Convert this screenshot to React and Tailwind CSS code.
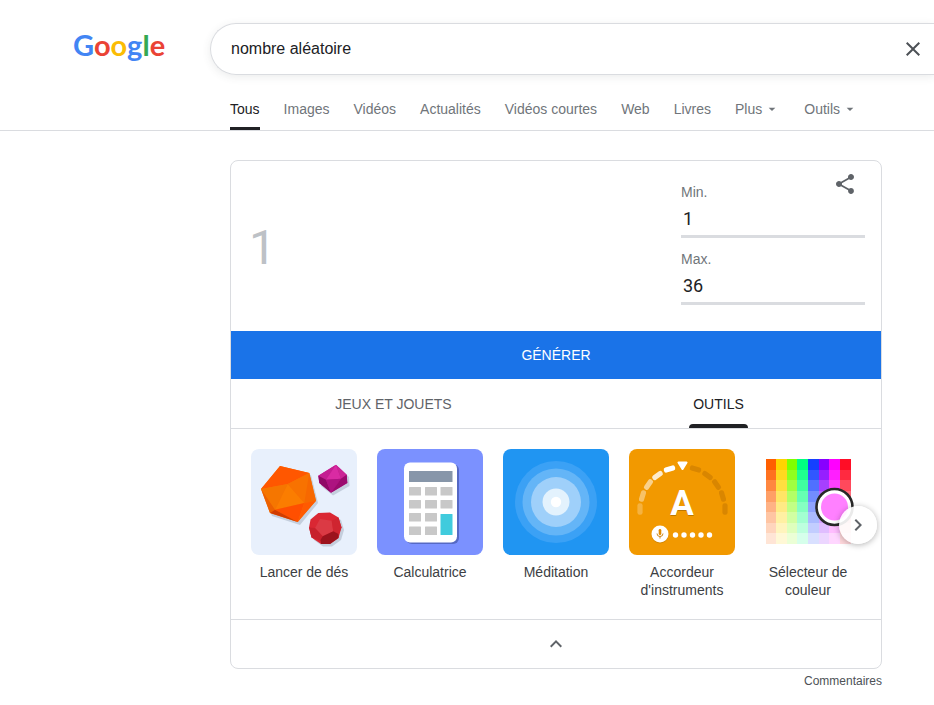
import React, { useState } from 'react';
import { MdShare, MdClose, MdArrowDropDown, MdExpandLess, MdChevronRight } from 'react-icons/md';

const NAV_LINKS = ['Images', 'Vidéos', 'Actualités', 'Vidéos courtes', 'Web', 'Livres'];

const DiceArt = () => (
    <svg viewBox="0 0 106 106" className="block w-full" aria-hidden="true">
        <rect width="106" height="106" fill="#e8f0fc" />
        {/* shadows */}
        <g fill="#9aa5b8" opacity="0.45">
            <path d="M31 19L60 26L67 54L49 76L21 67L12 43Z" />
            <path d="M69 29L87 18L98 28L98.500 37L82 46.500L70 37Z" />
            <path d="M69 66L81 66L90 71L93 81L90 91L81 97.500L72 97.500L63 91L60 81Z" />
        </g>
        {/* orange */}
        <path d="M29 17L58.300 24L65 51.700L46.700 73L19 64L10 40Z" fill="#f97300" />
        <path d="M10 40L29 17L58.300 24L36.700 35Z" fill="#ff5700" />
        <path d="M36.700 35L53.300 54L24 60.700Z" fill="#fb7d00" />
        <path d="M10 40L36.700 35L24 60.700Z" fill="#f57600" />
        <path d="M36.700 35L58.300 24L53.300 54Z" fill="#f87200" />
        <path d="M58.300 24L65 51.700L53.300 54Z" fill="#f76800" />
        <path d="M10 40L24 60.700L19 64Z" fill="#ec6000" />
        <path d="M24 60.700L53.300 54L46.700 73Z" fill="#ff4f00" />
        <path d="M53.300 54L65 51.700L46.700 73Z" fill="#ff5a00" />
        <path d="M24 60.700L19 64L46.700 73Z" fill="#d13c00" />
        {/* magenta */}
        <path d="M67.300 26.700L85 15.700L95.700 25.700L96.300 34L80 43.700L68.300 34Z" fill="#c2188a" />
        <path d="M67.300 26.700L85 15.700L75 30.700Z" fill="#c41e92" />
        <path d="M85 15.700L90 29.700L75 30.700Z" fill="#d92ba3" />
        <path d="M85 15.700L95.700 25.700L90 29.700Z" fill="#cb2596" />
        <path d="M67.300 26.700L75 30.700L80 43.700L68.300 34Z" fill="#8f0a66" />
        <path d="M75 30.700L90 29.700L80 43.700Z" fill="#ad1380" />
        <path d="M90 29.700L95.700 25.700L96.300 34L80 43.700Z" fill="#9b0b6e" />
        {/* red */}
        <path d="M67.300 64L79 63.500L87.500 68.500L90.500 78.500L87.500 89L79 95L70 95L60.500 88.500L58 78.500L59.500 70.500Z" fill="#da2733" />
        <path d="M69 70L80.700 71.700L82.300 82.300L71.700 87.300L64 79Z" fill="#db3a44" />
        <path d="M80.700 71.700L87.500 68.500L90.500 78.500L87.500 85L82.300 82.300Z" fill="#cf2530" />
        <path d="M58 78.500L64 79L71.700 87.300L70 92L60.500 88.500Z" fill="#c7212c" />
        <path d="M71.700 87.300L82.300 82.300L87.500 85L87.500 89L79 95L70 95L69.500 91Z" fill="#9c131d" />
    </svg>
);

const CalculatorArt = () => (
    <svg viewBox="0 0 106 106" className="block w-full" aria-hidden="true">
        <rect width="106" height="106" fill="#7b91ff" />
        <rect x="29" y="15" width="53" height="80" rx="6" fill="#5669c4" />
        <rect x="27" y="13.500" width="53" height="80" rx="6" fill="#fff" />
        <rect x="32" y="22" width="43.500" height="11" fill="#8796a9" />
        <g fill="#c8c8c8">
            {[38, 51, 64, 77.5].map((y, row) =>
                [32, 48, 63.5].map((x, col) =>
                    row > 1 && col === 2 ? null : <rect key={`${x}-${y}`} x={x} y={y} width="12" height="8.500" rx="0.500" />
                )
            )}
        </g>
        <rect x="63.500" y="65" width="12" height="21" rx="0.500" fill="#40cbdd" />
    </svg>
);

const MeditationArt = () => (
    <svg viewBox="0 0 106 106" className="block w-full" aria-hidden="true">
        <rect width="106" height="106" fill="#2095f2" />
        <circle cx="53" cy="53" r="41" fill="#3ba1f5" />
        <circle cx="53" cy="53" r="33.500" fill="#64b5f7" />
        <circle cx="53" cy="53" r="25" fill="#9fd0fa" />
        <circle cx="53" cy="53" r="13.500" fill="#e3f2fd" />
        <circle cx="53" cy="53" r="5.200" fill="#fff" />
    </svg>
);

// [x, y, angle, opacity] of each dash on the left half of the dial
const DIAL = [
    [11, 60, -90, 0.25],
    [13.5, 47, -73, 0.4],
    [19.5, 35.5, -55, 0.55],
    [28.5, 26.5, -35, 0.8],
    [40.5, 20, -16, 1],
];

const TunerArt = () => (
    <svg viewBox="0 0 106 106" className="block w-full" aria-hidden="true">
        <rect width="106" height="106" fill="#f29900" />
        {DIAL.map(([x, y, angle, opacity]) => (
            <g key={x}>
                <rect x="-5.800" y="-2.600" width="11.600" height="5.200" rx="2.200" fill="#fff" opacity={opacity} transform={`translate(${x} ${y}) rotate(${angle})`} />
                <rect x="-5.800" y="-2.600" width="11.600" height="5.200" rx="2.200" fill="#d98600" transform={`translate(${107 - x} ${y}) rotate(${-angle})`} />
            </g>
        ))}
        <path d="M49.500 12.500h8a1 1 0 0 1 .9 1.500l-4 6.500a1 1 0 0 1-1.800 0l-4-6.500a1 1 0 0 1 .9-1.500z" fill="#fff" />
        <text x="53" y="67" textAnchor="middle" fontFamily="Roboto, sans-serif" fontWeight="700" fontSize="35" fill="#bd7700">A</text>
        <text x="53" y="66" textAnchor="middle" fontFamily="Roboto, sans-serif" fontWeight="700" fontSize="35" fill="#fff">A</text>
        <circle cx="31" cy="86" r="8.500" fill="#d48600" />
        <circle cx="31" cy="85" r="8.500" fill="#fff" />
        <rect x="29.700" y="80" width="2.600" height="6" rx="1.300" fill="#e08a00" />
        <path d="M28 84.500a3 3 0 0 0 6 0M31 87.500v2" stroke="#c87a00" strokeWidth="0.900" fill="none" />
        {[46.5, 55, 63.5, 72, 80.5].map((x) => <circle key={x} cx={x} cy="86" r="2.700" fill="#fff" />)}
    </svg>
);

const HUES = ['#ff5f00', '#ffd400', '#80ff00', '#00ff80', '#1540ff', '#8800ff', '#ff00ff', '#ff0d26'];
const TINTS = [0, 0.12, 0.25, 0.4, 0.52, 0.64, 0.74, 0.84];

const ColorPickerArt = () => (
    <svg viewBox="0 0 106 106" className="block w-full" aria-hidden="true">
        <rect width="106" height="106" fill="#fff" />
        <g shapeRendering="crispEdges">
            {HUES.map((hue, i) => (
                <rect key={hue} x={10.5 + i * 10.625} y="10" width="10.700" height="85" fill={hue} />
            ))}
            {TINTS.map((tint, i) => (
                <rect key={tint} x="10" y={10 + i * 10.625} width="86" height="10.700" fill="#fff" opacity={tint} />
            ))}
        </g>
        <circle cx="79.500" cy="58" r="18" fill="#fff" stroke="#282828" strokeWidth="2.600" />
        <circle cx="79.500" cy="58" r="13.500" fill="#ff80ff" />
    </svg>
);

const TOOLS = [
    { name: 'Lancer de dés', Art: DiceArt },
    { name: 'Calculatrice', Art: CalculatorArt },
    { name: 'Méditation', Art: MeditationArt },
    { name: "Accordeur d'instruments", Art: TunerArt },
    { name: 'Sélecteur de couleur', Art: ColorPickerArt },
];

const Logo = () => (
    <a href="#accueil" aria-label="Google" className="block pb-2 font-['Lato',sans-serif] text-[29px] leading-9 font-bold">
        <span className="text-[#4285f4]">G</span>
        <span className="text-[#ea4335]">o</span>
        <span className="text-[#fbbc05]">o</span>
        <span className="text-[#4285f4]">g</span>
        <span className="text-[#34a853]">l</span>
        <span className="text-[#ea4335]">e</span>
    </a>
);

const NumberField = ({ id, value, onChange }) => (
    <input
        id={id}
        type="text"
        inputMode="numeric"
        value={value}
        onChange={(e) => onChange(e.target.value)}
        className="block h-9 w-full border-b-3 border-[#dadce0] pl-0.5 font-['Roboto',sans-serif] text-lg text-[#202124] outline-none"
    />
);

const Header = () => {
    const [query, setQuery] = useState('nombre aléatoire');

    return (
        <header className="border-b border-[#dadce0] pt-[23px]">
            <div className="flex items-center">
                <div className="w-[210px] shrink-0 pl-[73px]">
                    <Logo />
                </div>
                <form className="flex h-[52px] min-w-0 flex-1 items-center rounded-l-full border border-r-0 border-[#dadce0] pr-[9px] pl-5 shadow-[0_2px_8px_rgba(60,64,67,0.1)]">
                    <input
                        type="text"
                        aria-label="Rechercher"
                        value={query}
                        onChange={(e) => setQuery(e.target.value)}
                        className="min-w-0 flex-1 text-base text-[#202124] outline-none"
                    />
                    <button type="button" aria-label="Effacer" onClick={() => setQuery('')}>
                        <MdClose className="size-6 text-[#4d5156]" />
                    </button>
                </form>
            </div>
            <nav className="ml-[230px] flex h-[55px] items-end gap-6 text-sm whitespace-nowrap text-[#70757a]">
                <a href="#tous" className="border-b-3 border-[#202124] pb-2 text-[#202124]">Tous</a>
                {NAV_LINKS.map((name) => (
                    <a key={name} href={`#${name}`} className="pb-[11px]">{name}</a>
                ))}
                <button type="button" className="flex items-center gap-0.5 pb-[11px]">
                    Plus <MdArrowDropDown className="size-4" />
                </button>
                <button type="button" className="flex items-center gap-0.5 pb-[11px]">
                    Outils <MdArrowDropDown className="size-4" />
                </button>
            </nav>
        </header>
    );
};

const Generator = () => {
    const [min, setMin] = useState('1');
    const [max, setMax] = useState('36');
    const [result, setResult] = useState(1);

    const generate = () => {
        const low = Number(min);
        const high = Number(max);
        if (Number.isNaN(low) || Number.isNaN(high) || high < low) return;
        setResult(low + Math.floor(Math.random() * (high - low + 1)));
    };

    return (
        <>
            <div className="flex justify-between px-4 pb-[26px]">
                <output className="self-center pt-[30px] pl-0.5 font-['Roboto',sans-serif] text-5xl leading-14 text-[#bdc1c6]">{result}</output>
                <div className="w-[184px] pt-[11px] text-sm text-[#70757a]">
                    <div className="flex h-[30px] items-start justify-between pr-2">
                        <label htmlFor="min" className="self-end">Min.</label>
                        <button type="button" aria-label="Partager">
                            <MdShare className="size-6 text-[#5f6368]" />
                        </button>
                    </div>
                    <NumberField id="min" value={min} onChange={setMin} />
                    <label htmlFor="max" className="mt-[11px] block">Max.</label>
                    <NumberField id="max" value={max} onChange={setMax} />
                </div>
            </div>
            <button type="button" onClick={generate} className="block h-12 w-full bg-[#1a73e8] text-sm text-white">
                GÉNÉRER
            </button>
        </>
    );
};

const App = () => (
    <div className="bg-white font-['Liberation_Sans',Arial,sans-serif]">
        <Header />

        <main className="mt-[29px] ml-[230px] max-w-[652px]">
            <section className="overflow-hidden rounded-lg border border-[#dadce0]">
                <Generator />

                {/* Tabs */}
                <div role="tablist" className="grid h-[50px] grid-cols-2 border-b border-[#dadce0] text-sm">
                    <button type="button" role="tab" aria-selected="false" className="text-[#5f6368]">JEUX ET JOUETS</button>
                    <button type="button" role="tab" aria-selected="true" className="flex flex-col items-center justify-end text-[#202124]">
                        <span className="px-1 pb-[10px]">OUTILS</span>
                        <span className="h-1 w-[59px] rounded-t-sm bg-[#202124]"></span>
                    </button>
                </div>

                {/* Tools */}
                <div className="relative">
                    <div className="flex gap-5 px-5 pt-5 pb-5">
                        {TOOLS.map(({ name, Art }) => (
                            <a key={name} href={`#${name}`} className="w-[106px] shrink-0 text-center text-sm leading-[18px] text-[#3c4043]">
                                <div className="overflow-hidden rounded-lg">
                                    <Art />
                                </div>
                                <span className="mt-2 block">{name}</span>
                            </a>
                        ))}
                    </div>
                    <button type="button" aria-label="Suivant" className="absolute top-[77px] right-1 flex size-[38px] items-center justify-center rounded-full bg-white/90 shadow-[0_1px_6px_rgba(0,0,0,0.3)]">
                        <MdChevronRight className="size-6 text-[#5f6368]" />
                    </button>
                </div>

                <button type="button" aria-label="Réduire" className="flex h-[49px] w-full items-center justify-center border-t border-[#dadce0]">
                    <MdExpandLess className="size-6 text-[#5f6368]" />
                </button>
            </section>
            <div className="pt-1 text-right text-xs text-[#4d5156]">
                <a href="#commentaires">Commentaires</a>
            </div>
        </main>
    </div>
);

export default App;
